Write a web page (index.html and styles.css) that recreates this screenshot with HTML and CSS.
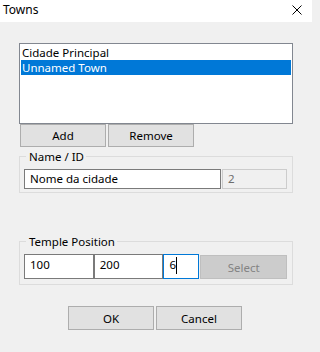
FILE: index.html
```html
<!DOCTYPE html>
<html>
<head>
<meta charset="utf-8">
<link rel="stylesheet" href="styles.css">
</head>
<body>
<div class="window">
  <div class="titlebar">
    <span class="title">Towns</span>
    <svg class="close" width="10" height="10" viewBox="0 0 10 10"><path d="M0.5 0.5 L9.5 9.5 M9.5 0.5 L0.5 9.5" stroke="#000" stroke-width="1" fill="none"/></svg>
  </div>
  <div class="content">
    <div class="listbox">
      <div class="item">Cidade Principal</div>
      <div class="item selected">Unnamed Town</div>
    </div>
    <div class="list-buttons">
      <button class="btn">Add</button>
      <button class="btn">Remove</button>
    </div>
    <fieldset class="group name-group">
      <legend>Name / ID</legend>
      <div class="field-row">
        <div class="textbox name-box">Nome da cidade</div>
        <div class="textbox id-box">2</div>
      </div>
    </fieldset>
    <fieldset class="group temple-group">
      <legend>Temple Position</legend>
      <div class="field-row">
        <div class="textbox coord">100</div>
        <div class="textbox coord">200</div>
        <div class="textbox coord-z focused">6<span class="caret"></span></div>
        <button class="btn select-btn" disabled>Select</button>
      </div>
    </fieldset>
    <div class="dialog-buttons">
      <button class="btn">OK</button>
      <button class="btn">Cancel</button>
    </div>
  </div>
</div>
</body>
</html>
```
FILE: styles.css
```css
html, body {
  margin: 0;
  padding: 0;
}
body {
  width: 312px;
  height: 352px;
  overflow: hidden;
  font-family: "Noto Sans", "Open Sans", sans-serif;
  font-size: 11.5px;
  color: #000;
  background: #f0f0f0;
}
.window {
  display: flex;
  flex-direction: column;
  width: 312px;
  height: 352px;
}
.titlebar {
  height: 22px;
  background: #fff;
  display: flex;
  align-items: flex-start;
  justify-content: space-between;
  flex: none;
}
.title {
  font-size: 12px;
  line-height: 20px;
  padding-left: 3px;
}
.close {
  margin-top: 5px;
  margin-right: 10px;
}
.content {
  display: flex;
  flex-direction: column;
  align-items: flex-start;
  padding-left: 19px;
}
.listbox {
  margin-top: 21px;
  width: 274px;
  height: 81px;
  box-sizing: border-box;
  border: 1px solid #828790;
  background: #fff;
  padding: 1px;
}
.item {
  line-height: 15px;
  height: 15px;
  padding-left: 1px;
  white-space: nowrap;
}
.item.selected {
  background: #0078d7;
  color: #fff;
}
.btn {
  font-family: "Noto Sans", "Open Sans", sans-serif;
  font-size: 11.5px;
  color: #000;
  background: #e1e1e1;
  border: 1px solid #adadad;
  border-radius: 0;
  padding: 0;
  margin: 0;
  width: 86px;
  height: 23px;
  box-sizing: border-box;
  line-height: 15px;
}
.list-buttons {
  display: flex;
  gap: 2px;
  margin-left: 1px;
}
.group {
  margin: 0;
  width: 274px;
  box-sizing: border-box;
  border: 1px solid #dcdcdc;
  min-inline-size: 0;
}
.group legend {
  line-height: 15px;
  padding: 0 2px 0 3px;
  margin-left: 2px;
}
.name-group {
  margin-top: 2px;
  padding: 0 5px 3px 4px;
}
.temple-group {
  margin-top: 41px;
  padding: 0 5px 5px 4px;
}
.field-row {
  display: flex;
  margin-top: 5px;
}
.textbox {
  box-sizing: border-box;
  background: #fff;
  border: 1px solid #7a7a7a;
  padding-left: 5px;
  white-space: nowrap;
}
.name-box {
  width: 197px;
  height: 20px;
  line-height: 18px;
}
.id-box {
  width: 65px;
  height: 20px;
  line-height: 18px;
  margin-left: 1px;
  background: #f0f0f0;
  border-color: #cccccc;
  color: #6d6d6d;
}
.coord, .coord-z {
  height: 25px;
  line-height: 16px;
  padding-top: 2px;
}
.coord {
  width: 70px;
}
.coord-z {
  width: 36px;
  border-color: #0078d7;
  display: flex;
  align-items: flex-start;
}
.caret {
  display: inline-block;
  width: 1px;
  height: 17px;
  background: #000;
}
.select-btn {
  width: 87px;
  height: 24px;
  margin-left: 1px;
  align-self: flex-end;
  background: #cccccc;
  border-color: #bfbfbf;
  color: #838383;
}
.dialog-buttons {
  display: flex;
  gap: 2px;
  margin-top: 21px;
  margin-left: 49px;
}
.dialog-buttons .btn {
  height: 24px;
}
```
